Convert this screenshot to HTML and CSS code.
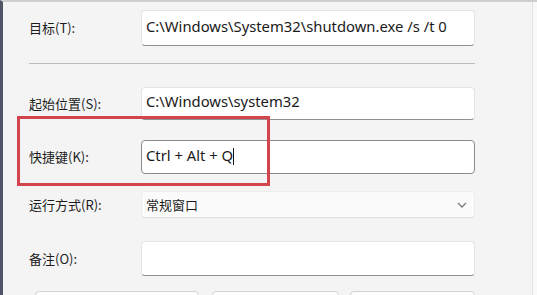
FILE: index.html
```html
<!DOCTYPE html>
<html lang="zh-CN">
<head>
<meta charset="utf-8">
<title>快捷方式属性</title>
<link rel="stylesheet" href="styles.css">
</head>
<body>
<div class="window">
  <div class="panel">
    <div class="form">
      <div class="row row-target">
        <label class="label">目标(T):</label>
        <div class="field input">C:\Windows\System32\shutdown.exe /s /t 0</div>
      </div>
      <div class="sep"></div>
      <div class="row row-start">
        <label class="label">起始位置(S):</label>
        <div class="field input">C:\Windows\system32</div>
      </div>
      <div class="row row-key">
        <label class="label">快捷键(K):</label>
        <div class="field input focused"><span>Ctrl + Alt + Q</span><span class="caret"></span></div>
        <div class="highlight"></div>
      </div>
      <div class="row row-run">
        <label class="label">运行方式(R):</label>
        <div class="field select"><span>常规窗口</span>
          <svg class="chev" width="10" height="6" viewBox="0 0 10 6"><polyline points="1,1 5,5 9,1" fill="none" stroke="#7a7a7a" stroke-width="1.3"/></svg>
        </div>
      </div>
      <div class="row row-note">
        <label class="label">备注(O):</label>
        <div class="field input"></div>
      </div>
      <div class="buttons">
        <div class="btn btn1"></div>
        <div class="btn btn2"></div>
        <div class="btn btn3"></div>
      </div>
    </div>
    <div class="side"></div>
  </div>
</div>
</body>
</html>
```

FILE: styles.css
```css
html, body {
  margin: 0;
  padding: 0;
  width: 537px;
  height: 295px;
  overflow: hidden;
  background: #f3f3f3;
}
.window {
  width: 537px;
  height: 295px;
  box-sizing: border-box;
  border-left: 3px solid #4e5566;
  border-top: 2px solid #cfcfcf;
  background: #f4f4f4;
  overflow: hidden;
}
.panel {
  display: flex;
  height: 100%;
}
.form {
  width: 446px;
  padding-left: 26px;
  padding-top: 8px;
  display: flex;
  flex-direction: column;
  flex: none;
}
.side {
  margin-left: 57px;
  width: 0;
  border-left: 1px solid #e2e2e2;
  flex: 1;
  background: #f9f9f9;
}
.row {
  display: flex;
  align-items: center;
  flex: none;
}
.label {
  width: 112px;
  flex: none;
  font-family: "Noto Sans CJK SC", "Noto Sans", sans-serif;
  font-size: 13px;
  color: #1c1c1c;
  line-height: 16px;
}
.field {
  box-sizing: border-box;
  width: 334px;
  border-radius: 4px;
  font-family: "Noto Sans", "Noto Sans CJK SC", sans-serif;
  font-size: 14.8px;
  line-height: 20px;
  color: #1a1a1a;
  display: flex;
  align-items: center;
  padding-left: 4px;
}
.input {
  background: #ffffff;
  border: 1px solid #e4e4e4;
  border-bottom: 1px solid #8f8f8f;
}
.row-target .field { height: 36px; align-items: flex-start; padding-top: 5px; }
.sep {
  flex: none;
  margin-top: 17px;
  height: 1px;
  background: #bdbdbd;
  width: 446px;
}
.row-start { margin-top: 23px; }
.row-start .field { height: 33px; align-items: flex-start; padding-top: 3px; }
.row-key { margin-top: 20px; position: relative; }
.row-key .field { height: 34px; align-items: flex-start; padding-top: 4px; }
.focused {
  border: 1px solid #8a8a8a;
}
.caret {
  display: inline-block;
  width: 1px;
  height: 17px;
  background: #111;
  margin-top: 3px;
}
.highlight {
  position: absolute;
  left: -12px;
  top: -24px;
  width: 253px;
  height: 70px;
  box-sizing: border-box;
  border: 3px solid #d4444c;
  pointer-events: none;
}
.row-run { margin-top: 17px; }
.select {
  height: 27px;
  background: #fbfbfb;
  border: 1px solid #ececec;
  border-bottom: 1px solid #dcdcdc;
  justify-content: space-between;
  padding-right: 7px;
  font-family: "Noto Sans CJK SC", "Noto Sans", sans-serif;
  font-size: 13px;
}
.row-note { margin-top: 23px; }
.row-note .field { height: 35px; }
.buttons {
  margin-top: 15px;
  margin-left: 6px;
  display: flex;
  flex: none;
}
.btn {
  height: 30px;
  box-sizing: border-box;
  background: #fdfdfd;
  border: 1px solid #d3d3d3;
  border-radius: 4px;
}
.btn1 { width: 164px; }
.btn2 { width: 127px; margin-left: 13px; }
.btn3 { width: 125px; margin-left: 11px; }
```
